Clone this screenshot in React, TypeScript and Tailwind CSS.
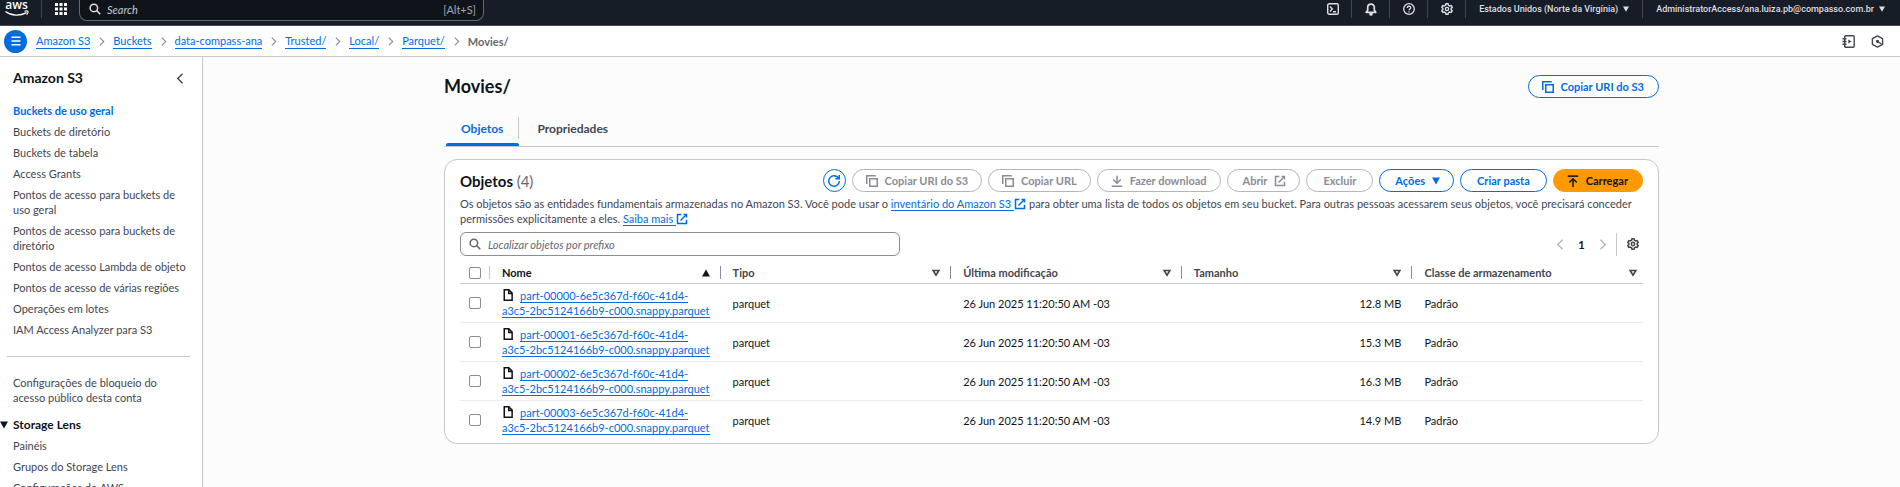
import React from "react";

type IconProps = { d: string[]; className?: string; width?: number };

function Icon({ d, className = "size-[12px]", width = 2 }: IconProps) {
  return (
    <svg
      viewBox="0 0 16 16"
      className={"shrink-0 " + className}
      fill="none"
      stroke="currentColor"
      strokeWidth={width}
      aria-hidden="true"
    >
      {d.map((path) => (
        <path key={path} d={path} />
      ))}
    </svg>
  );
}

const COPY = ["M15 5H5v10h10V5Z", "M13 1H1v11"];
const DOWNLOAD = ["M1 15h14", "M8 1v10", "M13 6l-5 5-5-5"];
const UPLOAD = ["M1 1.5h14", "M8 16V5", "M3 10l5-5 5 5"];
const EXTERNAL = ["M10 2h4v4", "M6 10l8-8", "M14 9v5H2V2h5"];
const REFRESH = ["M10 5h5V0", "M15 8a7 7 0 1 1-7-7 6.9 6.9 0 0 1 6.3 4"];
const SEARCH = ["M11.5 6.5a5 5 0 1 1-10 0 5 5 0 0 1 10 0Z", "M10.2 10.2 15 15"];
const FILE = ["M9 1H3v14h10.5V5.5L9 1Z", "M9 1v5h4.5"];
const GEAR = [
  "M6.6 1h2.8l.5 2 1.7 1 2-.6 1.4 2.4L13.500 7.200v1.600L15 10.200l-1.400 2.400-2-.6-1.700 1-.5 2H6.600l-.5-2-1.700-1-2 .6L1 10.200l1.500-1.400V7.200L1 5.800l1.400-2.400 2 .6 1.700-1 .5-2Z",
  "M10.200 8a2.200 2.200 0 1 1-4.400 0 2.200 2.200 0 0 1 4.400 0Z",
];
const RIGHT = ["M5 1l7 7-7 7"];
const LEFT = ["M11 1 4 8l7 7"];

function Caret({ up = false, className = "size-[8px]" }: { up?: boolean; className?: string }) {
  return (
    <svg viewBox="0 0 8 8" className={"shrink-0 " + className} fill="currentColor" aria-hidden="true">
      <path d={up ? "M4 0.500 8 7.500H0Z" : "M0 0.500h8L4 7.500Z"} />
    </svg>
  );
}

const link = "text-[#006ce0] border-b border-[#006ce0]";
const button =
  "flex h-[23px] items-center gap-[7px] whitespace-nowrap rounded-full border px-[13px] text-[11px] font-bold leading-[15px]";
const normal = "border-[#006ce0] bg-white text-[#006ce0]";
const disabled = "border-[#b4b4bb] bg-white text-[#8c8c94]";

function TopBar() {
  const tool = "flex h-[18px] w-[38px] items-center justify-center border-r border-[#424650]";
  return (
    <header className="flex h-[26px] shrink-0 items-start justify-between border-b border-[#424650] bg-[#161d26] font-bold text-[#dedee3]">
      <div className="flex h-[21px] items-start">
        <a href="#aws" aria-label="aws" className="flex h-[18px] w-[42px] border-r border-[#424650] pl-[4px]">
          <svg viewBox="0 0 26 18" className="h-[18px] w-[26px]">
            <text x="12.500" y="9" textAnchor="middle" fontSize="12" fontWeight="600" fontFamily="Open Sans, sans-serif" fill="#fff">
              aws
            </text>
            <path d="M1.500 11.500c6 4.600 14.500 4.700 21 1.200" fill="none" stroke="#fff" strokeWidth="1.400" />
            <path d="M20.500 11.300c1.500-.5 3-.5 3.500 0 .3.600-.3 2.200-1.300 3.400" fill="none" stroke="#fff" strokeWidth="1.100" />
          </svg>
        </a>
        <button aria-label="Services" className="flex h-[18px] w-[37px] items-center justify-center">
          <svg viewBox="0 0 12 12" className="size-[12px]" fill="#fff">
            {[0, 4.5, 9].map((x) => [0, 4.5, 9].map((y) => <rect key={`${x}-${y}`} x={x} y={y} width="3" height="3" />))}
          </svg>
        </button>
        <label className="flex h-[21px] w-[405px] items-center gap-[6px] rounded-b-[8px] border border-t-0 border-[#656871] bg-[#0f141a] pb-[2px] pl-[9px] pr-[7px]">
          <Icon d={SEARCH} />
          <input
            type="text"
            aria-label="Search"
            placeholder="Search"
            className="min-w-0 flex-1 bg-transparent text-[11px] font-normal italic leading-[15px] outline-none placeholder:text-[#c6c6cd]"
          />
          <span className="text-[11px] font-normal leading-[15px] text-[#a4a4ad]">[Alt+S]</span>
        </label>
      </div>
      <div className="flex items-start font-['Roboto',sans-serif] text-[9px] font-medium leading-[18px]">
        <button aria-label="CloudShell" className={tool}>
          <svg viewBox="0 0 12 12" className="size-[12px]" fill="none" stroke="currentColor" strokeWidth="1.400">
            <rect x="0.700" y="0.700" width="10.600" height="10.600" rx="1.500" />
            <path d="M3 3.500 5.300 6 3 8.500M6 8.800h3" />
          </svg>
        </button>
        <button aria-label="Notificações" className={tool}>
          <svg viewBox="0 0 12 13" className="h-[13px] w-[12px]">
            <path d="M6 1.200c-2 0-3.300 1.500-3.300 3.400v2.600L1.200 9.300h9.600L9.300 7.200V4.600C9.300 2.700 8 1.200 6 1.200Z" fill="none" stroke="currentColor" strokeWidth="1.700" strokeLinejoin="round" />
            <path d="M4.300 10h3.400v1.200a1.700 1.500 0 0 1-3.400 0Z" fill="currentColor" />
          </svg>
        </button>
        <button aria-label="Ajuda" className={tool}>
          <svg viewBox="0 0 12 12" className="size-[12px]" fill="none" stroke="currentColor" strokeWidth="1.300">
            <circle cx="6" cy="6" r="5.300" />
            <path d="M4.300 4.900c0-2.200 3.400-2.200 3.400-.1 0 1.200-1.700 1.200-1.700 2.500M6 8.200v1.300" />
          </svg>
        </button>
        <button aria-label="Configurações" className={tool}>
          <Icon d={GEAR} width={1.8} />
        </button>
        <button className="flex h-[18px] items-center gap-[5px] border-r border-[#424650] px-[13px]">
          Estados Unidos (Norte da Virgínia)
          <Caret className="size-[6px]" />
        </button>
        <button className="flex h-[18px] items-center gap-[5px] pl-[13px] pr-[15px]">
          AdministratorAccess/ana.luiza.pb@compasso.com.br
          <Caret className="size-[6px]" />
        </button>
      </div>
    </header>
  );
}

function Breadcrumbs() {
  const crumbs = ["Amazon S3", "Buckets", "data-compass-ana", "Trusted/", "Local/", "Parquet/"];
  return (
    <div className="flex h-[31px] shrink-0 items-center border-b border-[#c6c6cd] bg-white pl-[4px] pr-[16px]">
      <button aria-label="Menu" className="flex size-[23px] items-center justify-center rounded-full bg-[#006ce0] text-white">
        <Icon d={["M2 3h12", "M2 8h12", "M2 13h12"]} />
      </button>
      <nav aria-label="Breadcrumbs" className="ml-[9px] flex-1">
        <ol className="flex items-center gap-[7px] text-[11px] leading-[15px]">
          {crumbs.map((crumb) => (
            <li key={crumb} className="flex items-center gap-[7px]">
              <a href="#crumb" className={link}>
                {crumb}
              </a>
              <Icon d={RIGHT} className="size-[9px] text-[#8c8c94]" />
            </li>
          ))}
          <li className="font-bold text-[#656871]">Movies/</li>
        </ol>
      </nav>
      <div className="flex items-center gap-[16px] text-[#424650]">
        <button aria-label="Tutoriais">
          <svg viewBox="0 0 13 13" className="size-[13px]" fill="none" stroke="currentColor" strokeWidth="1.400">
            <rect x="2.700" y="0.800" width="9.500" height="11.400" rx="1" />
            <path d="M0.500 3.700h4M0.500 6.500h4M0.500 9.300h4" />
            <path d="M6.300 4.500v4l3.200-2Z" fill="currentColor" stroke="none" />
          </svg>
        </button>
        <button aria-label="Diagnóstico">
          <svg viewBox="0 0 13 13" className="size-[13px]" fill="none" stroke="currentColor" strokeWidth="1.400">
            <path d="M6.500 0.900 11.600 3.700v5.600L6.500 12.100 1.400 9.300V3.700Z" strokeLinejoin="round" />
            <circle cx="6.500" cy="6.300" r="0.900" fill="currentColor" />
            <path d="M6.500 6.500 10.500 9" />
          </svg>
        </button>
      </div>
    </div>
  );
}

function NavList({ items, active }: { items: string[]; active?: string }) {
  return (
    <ul className="flex flex-col gap-[6px] pl-[13px] pr-[12px]">
      {items.map((item) => (
        <li key={item}>
          <a href="#nav" className={item === active ? "block font-bold text-[#006ce0]" : "block text-[#424650]"}>
            {item}
          </a>
        </li>
      ))}
    </ul>
  );
}

function Sidebar() {
  return (
    <aside className="w-[203px] shrink-0 overflow-hidden border-r border-[#c6c6cd] bg-white text-[11px] leading-[15px]">
      <div className="flex h-[42px] items-center justify-between pl-[13px] pr-[16px]">
        <h2 className="text-[14px] font-bold leading-[18px] text-[#0f141a]">Amazon S3</h2>
        <button aria-label="Fechar navegação" className="text-[#424650]">
          <Icon d={LEFT} className="size-[11px]" />
        </button>
      </div>
      <nav className="pt-[4px]">
        <NavList
          active="Buckets de uso geral"
          items={[
            "Buckets de uso geral",
            "Buckets de diretório",
            "Buckets de tabela",
            "Access Grants",
            "Pontos de acesso para buckets de uso geral",
            "Pontos de acesso para buckets de diretório",
            "Pontos de acesso Lambda de objeto",
            "Pontos de acesso de várias regiões",
            "Operações em lotes",
            "IAM Access Analyzer para S3",
          ]}
        />
        <hr className="mb-[18px] ml-[7px] mr-[12px] mt-[19px] border-[#c6c6cd]" />
        <NavList items={["Configurações de bloqueio do acesso público desta conta"]} />
        <button className="mb-[6px] mt-[12px] flex items-center gap-[5px] text-[12px] font-bold leading-[15px] text-[#0f141a]">
          <Caret />
          Storage Lens
        </button>
        <NavList items={["Painéis", "Grupos do Storage Lens", "Configurações do AWS Organizations"]} />
      </nav>
    </aside>
  );
}

function ExternalLink({ children }: { children: string }) {
  return (
    <a href="#external" className="text-[#006ce0]">
      <span className="border-b border-[#006ce0] pr-[3px]">{children}</span>
      <Icon d={EXTERNAL} className="inline-block size-[12px] align-[-2px]" />
    </a>
  );
}

const FILES = [
  { name: "part-00000-6e5c367d-f60c-41d4-a3c5-2bc5124166b9-c000.snappy.parquet", size: "12.8 MB" },
  { name: "part-00001-6e5c367d-f60c-41d4-a3c5-2bc5124166b9-c000.snappy.parquet", size: "15.3 MB" },
  { name: "part-00002-6e5c367d-f60c-41d4-a3c5-2bc5124166b9-c000.snappy.parquet", size: "16.3 MB" },
  { name: "part-00003-6e5c367d-f60c-41d4-a3c5-2bc5124166b9-c000.snappy.parquet", size: "14.9 MB" },
];
const COLUMNS = ["Nome", "Tipo", "Última modificação", "Tamanho", "Classe de armazenamento"];

function Check({ label }: { label: string }) {
  return (
    <input
      type="checkbox"
      aria-label={label}
      className="block size-[12px] appearance-none rounded-[2px] border border-[#8c8c94] bg-white checked:bg-[#006ce0]"
    />
  );
}

function ObjectsTable() {
  return (
    <table className="mt-[6px] w-full table-fixed border-separate border-spacing-0 text-left text-[#0f141a]">
      <thead>
        <tr className="h-[22px]">
          <th className="w-[30px] border-b border-[#c6c6cd] p-0">
            <div className="flex h-[13px] items-center border-r border-[#c6c6cd] pl-[9px]">
              <Check label="Selecionar tudo" />
            </div>
          </th>
          {COLUMNS.map((column, index) => (
            <th key={column} className="border-b border-[#c6c6cd] p-0 font-bold">
              <div
                className={
                  "flex h-[13px] items-center justify-between pl-[12px] " +
                  (index === COLUMNS.length - 1 ? "pr-[6px] " : "border-r border-[#8c8c94] pr-[10px] ") +
                  (index === 0 ? "text-[#0f141a]" : "text-[#424650]")
                }
              >
                {column}
                {index === 0 ? (
                  <Caret up />
                ) : (
                  <svg viewBox="0 0 8 8" className="size-[8px]" fill="none" stroke="currentColor" strokeWidth="1.700">
                    <path d="M1.100 1.500h5.800L4 6.200Z" />
                  </svg>
                )}
              </div>
            </th>
          ))}
        </tr>
      </thead>
      <tbody>
        {FILES.map((file, index) => {
          const cell = index === FILES.length - 1 ? "py-[4px] " : "border-b border-[#ebebf0] py-[4px] ";
          return (
            <tr key={file.name}>
              <td className={cell + "pl-[9px]"}>
                <Check label={"Selecionar " + file.name} />
              </td>
              <td className={cell + "pl-[12px] pr-[8px]"}>
                <Icon d={FILE} className="mr-[6px] inline-block size-[12px] align-[-1px]" />
                <a href="#object" className={link}>
                  {file.name}
                </a>
              </td>
              <td className={cell + "pl-[12px]"}>parquet</td>
              <td className={cell + "pl-[12px]"}>26 Jun 2025 11:20:50 AM -03</td>
              <td className={cell + "pr-[11px] text-right"}>{file.size}</td>
              <td className={cell + "pl-[12px]"}>Padrão</td>
            </tr>
          );
        })}
      </tbody>
    </table>
  );
}

function ObjectsPanel() {
  return (
    <section className="mt-[12px] rounded-[13px] border border-[#c6c6cd] bg-white px-[15px] pb-[4px] pt-[9px] text-[11px] leading-[15px]">
      <div className="flex items-center justify-between">
        <h2 className="text-[15px] font-bold leading-[18px] text-[#0f141a]">
          Objetos <span className="font-normal text-[#656871]">(4)</span>
        </h2>
        <div className="flex gap-[6px]">
          <button aria-label="Atualizar" className="flex size-[23px] items-center justify-center rounded-full border border-[#006ce0] text-[#006ce0]">
            <Icon d={REFRESH} />
          </button>
          <button disabled className={button + " " + disabled}>
            <Icon d={COPY} />
            Copiar URI do S3
          </button>
          <button disabled className={button + " " + disabled}>
            <Icon d={COPY} />
            Copiar URL
          </button>
          <button disabled className={button + " " + disabled}>
            <Icon d={DOWNLOAD} />
            Fazer download
          </button>
          <button disabled className={button + " " + disabled}>
            <span className="pl-[2px]">Abrir</span>
            <Icon d={EXTERNAL} />
          </button>
          <button disabled className={button + " " + disabled}>
            <span className="px-[3px]">Excluir</span>
          </button>
          <button className={button + " " + normal}>
            <span className="pl-[2px]">Ações</span>
            <Caret />
          </button>
          <button className={button + " " + normal}>
            <span className="px-[3px]">Criar pasta</span>
          </button>
          <button className={button + " border-[#ff9900] bg-[#ff9900] text-[#0f141a]"}>
            <Icon d={UPLOAD} />
            <span className="pr-[1px]">Carregar</span>
          </button>
        </div>
      </div>
      <p className="mt-[4px] text-[#424650]">
        Os objetos são as entidades fundamentais armazenadas no Amazon S3. Você pode usar o{" "}
        <ExternalLink>inventário do Amazon S3</ExternalLink> para obter uma lista de todos os objetos em seu bucket. Para
        outras pessoas acessarem seus objetos, você precisará conceder permissões explicitamente a eles.{" "}
        <ExternalLink>Saiba mais</ExternalLink>
      </p>
      <div className="mt-[6px] flex items-center justify-between">
        <label className="flex h-[24px] w-[440px] items-center gap-[7px] rounded-[6px] border border-[#8c8c94] bg-white px-[8px] text-[#656871]">
          <Icon d={SEARCH} />
          <input
            type="text"
            aria-label="Localizar objetos por prefixo"
            placeholder="Localizar objetos por prefixo"
            className="min-w-0 flex-1 bg-transparent italic outline-none placeholder:text-[#656871]"
          />
        </label>
        <div className="flex items-center pr-[4px]">
          <button aria-label="Página anterior" disabled className="text-[#b4b4bb]">
            <Icon d={LEFT} className="size-[11px]" />
          </button>
          <button className="w-[31px] text-center font-bold text-[#0f141a]">1</button>
          <button aria-label="Próxima página" disabled className="text-[#b4b4bb]">
            <Icon d={RIGHT} className="size-[11px]" />
          </button>
          <span className="ml-[8px] mr-[10px] h-[23px] w-px bg-[#c6c6cd]" />
          <button aria-label="Preferências" className="text-[#424650]">
            <Icon d={GEAR} />
          </button>
        </div>
      </div>
      <ObjectsTable />
    </section>
  );
}

export default function App() {
  return (
    <div className="flex h-screen flex-col overflow-hidden bg-[#fcfcfd] font-['Lato','Noto_Sans',sans-serif]">
      <TopBar />
      <Breadcrumbs />
      <div className="flex min-h-0 flex-1">
        <Sidebar />
        <main className="min-w-0 flex-1 overflow-hidden pt-[18px]">
          <div className="mx-auto max-w-[1215px]">
            <div className="flex items-center justify-between">
              <h1 className="text-[18px] font-bold leading-[23px] text-[#0f141a]">Movies/</h1>
              <button className={button + " " + normal}>
                <Icon d={COPY} />
                <span className="pr-[1px]">Copiar URI do S3</span>
              </button>
            </div>
            <div role="tablist" className="mt-[14px] flex h-[35px] border-b border-[#c6c6cd] pl-[2px] text-[12px] font-bold leading-[15px]">
              <button role="tab" aria-selected="true" className="flex flex-col text-[#006ce0]">
                <span className="mt-[5px] flex h-[22px] items-center border-r border-[#c6c6cd] px-[15px]">Objetos</span>
                <span className="mt-[4px] h-[3px] w-full rounded-t-[2px] bg-[#006ce0]" />
              </button>
              <button role="tab" aria-selected="false" className="mt-[5px] flex h-[22px] items-center px-[18px] text-[#424650]">
                Propriedades
              </button>
            </div>
            <ObjectsPanel />
          </div>
        </main>
      </div>
    </div>
  );
}
